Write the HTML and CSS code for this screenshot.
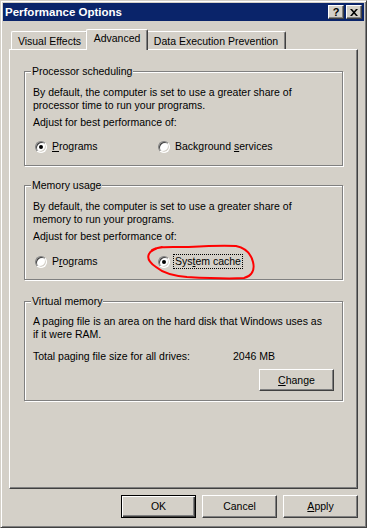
FILE: index.html
```html
<!DOCTYPE html>
<html lang="en">
<head>
    <meta charset="UTF-8">
    <title>Performance Options</title>
    <link rel="stylesheet" href="styles.css">
</head>
<body>
    <div class="window">
        <div class="titlebar">
            <span class="title">Performance Options</span>
            <span class="caption-btn help">?</span>
            <span class="caption-btn close">
                <svg width="8" height="7" viewBox="0 0 8 7"><path d="M0 0h2l2 2.2L6 0h2L5 3.5 8 7H6L4 4.8 2 7H0l3-3.5z" fill="#000"/></svg>
            </span>
        </div>
        <div class="content">
            <div class="tabs">
                <div class="tab">Visual Effects</div>
                <div class="tab active">Advanced</div>
                <div class="tab">Data Execution Prevention</div>
            </div>
            <div class="panel">
                <div class="group">
                    <span class="legend">Processor scheduling</span>
                    <p class="desc">By default, the computer is set to use a greater share of<br>processor time to run your programs.</p>
                    <p class="adjust">Adjust for best performance of:</p>
                    <div class="options">
                        <div class="option"><span class="radio checked"></span><span><u>P</u>rograms</span></div>
                        <div class="option"><span class="radio"></span><span>Background <u>s</u>ervices</span></div>
                    </div>
                </div>
                <div class="group memory">
                    <span class="legend">Memory usage</span>
                    <p class="desc">By default, the computer is set to use a greater share of<br>memory to run your programs.</p>
                    <p class="adjust">Adjust for best performance of:</p>
                    <div class="options">
                        <div class="option"><span class="radio"></span><span>P<u>r</u>ograms</span></div>
                        <div class="option"><span class="radio checked"></span><span class="focused">Sys<u>t</u>em cache</span></div>
                    </div>
                </div>
                <div class="group virtual">
                    <span class="legend">Virtual memory</span>
                    <p class="desc">A paging file is an area on the hard disk that Windows uses as<br>if it were RAM.</p>
                    <div class="total">
                        <span class="total-label">Total paging file size for all drives:</span>
                        <span>2046 MB</span>
                    </div>
                    <div class="change-row">
                        <span class="btn change"><u>C</u>hange</span>
                    </div>
                </div>
            </div>
            <div class="buttons">
                <span class="btn default">OK</span>
                <span class="btn">Cancel</span>
                <span class="btn"><u>A</u>pply</span>
            </div>
        </div>
    </div>
    <!-- red marker drawn over the dialog -->
    <svg class="annotation" width="367" height="528" viewBox="0 0 367 528">
        <path d="M152 250 C158 246, 170 247, 187 247 C205 246, 222 245, 236 246 C246 248, 251 254, 253 262 C255 270, 252 276, 244 278 C230 279, 205 278, 187 277 C175 276, 163 273, 156 267 C150 263, 147 258, 149 254 C150 251, 156 248, 162 247" fill="none" stroke="#f00" stroke-width="2" stroke-linecap="round"/>
    </svg>
</body>
</html>
```

FILE: styles.css
```css
body {
    margin: 0;
    position: relative;
    font-family: "Liberation Sans", Arial, sans-serif;
    font-size: 10.5px;
    line-height: 13px;
    color: #000;
    background: #d4d0c8;
}
.window {
    width: 367px;
    height: 528px;
    box-sizing: border-box;
    background: #d4d0c8;
    border: 1px solid;
    border-color: #d4d0c8 #404040 #404040 #d4d0c8;
    box-shadow: inset 1px 1px 0 #fff, inset -1px -1px 0 #808080;
    padding: 2px;
}
.titlebar {
    height: 18px;
    background: #0a246a;
    display: flex;
    align-items: center;
    padding: 0 2px 0 2px;
}
.title {
    color: #fff;
    font-weight: bold;
    font-size: 11.5px;
    flex: 1;
}
.caption-btn {
    width: 16px;
    height: 14px;
    box-sizing: border-box;
    background: #d4d0c8;
    border: 1px solid;
    border-color: #fff #404040 #404040 #fff;
    box-shadow: inset -1px -1px 0 #808080;
    display: flex;
    align-items: center;
    justify-content: center;
    font-weight: bold;
    font-size: 11px;
}
.caption-btn.close {
    margin-left: 2px;
}
.content {
    padding: 8px 6px 0 6px;
}
.tabs {
    display: flex;
    align-items: flex-end;
    height: 20px;
    padding-left: 2px;
}
.tab {
    position: relative;
    height: 18px;
    box-sizing: border-box;
    border: 1px solid;
    border-bottom: none;
    border-color: #fff #404040 #404040 #fff;
    box-shadow: inset -1px 0 0 #808080;
    border-radius: 2px 2px 0 0;
    text-align: center;
    padding-top: 3px;
    width: 77px;
}
.tab:last-child {
    width: 140px;
}
.tab.active {
    width: 62px;
    height: 21px;
    margin: 0 -2px -1px;
    padding-top: 2px;
    background: #d4d0c8;
    z-index: 2;
}
.panel {
    height: 440px;
    box-sizing: border-box;
    border: 1px solid;
    border-color: #fff #404040 #404040 #fff;
    box-shadow: inset -1px -1px 0 #808080;
    padding: 21px 14px 0 14px;
}
.group {
    width: 319px;
    height: 95px;
    box-sizing: border-box;
    border: 1px solid #808080;
    box-shadow: inset 1px 1px 0 #fff, 1px 1px 0 #fff;
    padding: 0 8px;
}
.group.memory {
    margin-top: 19px;
}
.group.virtual {
    margin-top: 21px;
    height: 100px;
}
.legend {
    display: table;
    margin: -7px 0 0 -2px;
    padding: 0 1px;
    background: #d4d0c8;
}
p {
    margin: 0;
}
.desc {
    margin-top: 8px;
}
.virtual .desc {
    margin-top: 7px;
}
.adjust {
    margin-top: 4px;
}
.options {
    display: flex;
    margin-top: 11px;
    padding-left: 2px;
}
.option {
    display: flex;
    align-items: center;
    gap: 5px;
    width: 123px;
}
.radio {
    position: relative;
    flex: none;
    width: 12px;
    height: 12px;
    box-sizing: border-box;
    border-radius: 50%;
    background: #fff;
    border: 1px solid;
    border-color: #808080 #fff #fff #808080;
    box-shadow: inset 1px 1px 0 #404040, inset -1px -1px 0 #d4d0c8;
}
.radio.checked::after {
    content: "";
    position: absolute;
    left: 3px;
    top: 3px;
    width: 4px;
    height: 4px;
    border-radius: 50%;
    background: #000;
}
.focused {
    border: 1px dotted #000;
    margin-left: -2px;
    padding: 0 1px;
}
.total {
    display: flex;
    margin-top: 9px;
}
.total-label {
    width: 200px;
}
.change-row {
    display: flex;
    justify-content: flex-end;
    margin-top: 6px;
}
.btn {
    width: 75px;
    height: 23px;
    box-sizing: border-box;
    background: #d4d0c8;
    border: 1px solid;
    border-color: #fff #404040 #404040 #fff;
    box-shadow: inset -1px -1px 0 #808080;
    display: flex;
    align-items: center;
    justify-content: center;
}
.btn.change {
    height: 22px;
}
.btn.default {
    border-color: #000;
    box-shadow: inset 1px 1px 0 #fff, inset -1px -1px 0 #404040, inset -2px -2px 0 #808080;
}
.buttons {
    display: flex;
    justify-content: flex-end;
    gap: 6px;
    margin-top: 6px;
}
.annotation {
    position: absolute;
    left: 0;
    top: 0;
    pointer-events: none;
}
```
